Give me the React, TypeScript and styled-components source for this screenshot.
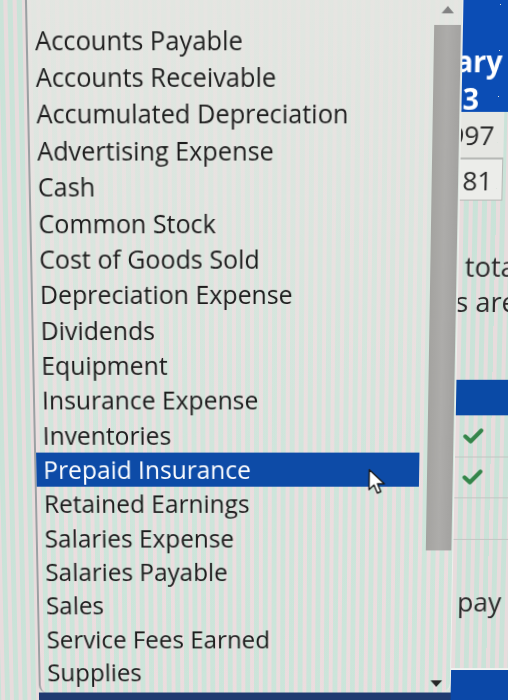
import React from "react";
import styled, { createGlobalStyle, css } from "styled-components";

const ACCOUNTS = [
  "Accounts Payable",
  "Accounts Receivable",
  "Accumulated Depreciation",
  "Advertising Expense",
  "Cash",
  "Common Stock",
  "Cost of Goods Sold",
  "Depreciation Expense",
  "Dividends",
  "Equipment",
  "Insurance Expense",
  "Inventories",
  "Prepaid Insurance",
  "Retained Earnings",
  "Salaries Expense",
  "Salaries Payable",
  "Sales",
  "Service Fees Earned",
  "Supplies",
];
const SELECTED = "Prepaid Insurance";

const GlobalStyle = createGlobalStyle`
  html, body { margin: 0; padding: 0; background: #dde4de; overflow: hidden; }
  #root { width: 508px; height: 700px; overflow: hidden; }
  *, *::before, *::after { box-sizing: border-box; }
`;

const moire = css`
  background-color: #dfe5e0;
  background-image: repeating-linear-gradient(
    90deg,
    rgba(238, 214, 219, 0.6) 0 4px,
    rgba(188, 225, 211, 0.6) 4px 9px
  );
`;

/* the whole screen, tilted a little like the photographed monitor */
const Scene = styled.div`
  display: flex;
  width: 540px;
  height: 740px;
  margin: -20px 0 0 -16px;
  transform-origin: 50% 50%;
  transform: perspective(1000px) rotateX(-5.2deg);
  font-family: "Open Sans", "Noto Sans", "DejaVu Sans", sans-serif;
  color: #1d1d1d;
`;

const Gutter = styled.div`
  flex: none;
  width: 48px;
  ${moire};
`;

const MenuColumn = styled.div`
  flex: none;
  width: 425px;
  display: flex;
  flex-direction: column;
`;

const Panel = styled.div`
  position: relative;
  flex: 1;
  display: flex;
  border-left: 2px solid #9aa1a3;
  border-right: 1px solid #eef0ed;
  border-radius: 0 0 10px 8px;
  overflow: hidden;
  background-color: #e1e6e1;
  background-image: linear-gradient(
      to bottom,
      rgba(229, 230, 226, 0.95) 0px,
      rgba(229, 230, 226, 0.6) 260px,
      rgba(229, 230, 226, 0.2) 520px,
      rgba(229, 230, 226, 0.1) 740px
    ),
    repeating-linear-gradient(
      90deg,
      rgba(240, 216, 221, 0.75) 0 4px,
      rgba(192, 228, 214, 0.75) 4px 9px
    );

  &::before {
    content: "";
    position: absolute;
    left: -2px;
    top: 0;
    width: 2px;
    height: 134px;
    background: #2b3d6e;
  }
`;

const BottomStrip = styled.div`
  flex: none;
  height: 15px;
  background: #1f3a70;
`;

const List = styled.ul`
  flex: 1;
  list-style: none;
  margin: 0;
  padding: 49.8px 7px 0 0;
`;

const Item = styled.li<{ $selected?: boolean }>`
  position: relative;
  height: 35.35px;
  line-height: 35.35px;
  padding-left: 7px;
  font-size: 24.8px;
  white-space: nowrap;
  color: ${(p) => (p.$selected ? "#ffffff" : "#1d1d1d")};
  background: ${(p) => (p.$selected ? "#0d4ba7" : "transparent")};
`;

const Cursor = styled.svg`
  position: absolute;
  left: 335px;
  top: 16px;
  width: 20px;
  height: 28px;
`;

const Scrollbar = styled.div`
  flex: none;
  width: 28px;
  display: flex;
  flex-direction: column;
  align-items: center;
  padding-top: 35px;
`;

const Arrow = styled.div<{ $dir: "up" | "down" }>`
  flex: none;
  width: 0;
  height: 0;
  border-left: 6px solid transparent;
  border-right: 6px solid transparent;
  ${(p) =>
    p.$dir === "up"
      ? css`
          border-bottom: 7px solid #828282;
          margin-bottom: 11px;
        `
      : css`
          border-top: 7px solid #262626;
          margin-top: auto;
          margin-bottom: 6px;
        `}
`;

const Thumb = styled.div`
  flex: none;
  width: 26px;
  height: 521.5px;
  background: linear-gradient(90deg, #a4a3a0 0%, #adacaa 50%, #a3a2a0 100%);
`;

const RightPane = styled.div`
  flex: 1;
  overflow: hidden;
  display: flex;
  ${moire};
`;

/* the page that the open menu covers; only its right edge shows */
const Sheet = styled.div`
  flex: none;
  width: 164px;
  margin-left: -97px;
  display: flex;
  flex-direction: column;
`;

const HeaderCell = styled.div`
  flex: none;
  height: 136px;
  padding-top: 69px;
  overflow: hidden;
  background: #0b4db5;
  color: #ffffff;
  font-weight: 700;
  font-size: 28px;
  line-height: 36px;
  text-align: center;
`;

const AmountRow = styled.div<{ $h: number; $boxed?: boolean }>`
  flex: none;
  height: ${(p) => p.$h}px;
  line-height: ${(p) => p.$h}px;
  margin-right: 25px;
  padding-right: 9px;
  text-align: right;
  font-size: 26px;
  color: #2a2a2a;
  background: ${(p) => (p.$boxed ? "#ecedea" : "#e6e7e3")};
  border: ${(p) => (p.$boxed ? "1px solid #b7b9b6" : "none")};
  border-bottom: 1px solid #b7b9b6;
`;

const Para = styled.div<{ $mt: number }>`
  flex: none;
  margin-top: ${(p) => p.$mt}px;
  font-size: 27px;
  line-height: 34.5px;
  color: #2a2a2a;
  white-space: nowrap;
`;

const TextLine = styled.div<{ $indent: number }>`
  padding-left: ${(p) => p.$indent}px;
`;

const BlueBar = styled.div`
  flex: none;
  height: 35.4px;
  margin-top: 61px;
  background: #0a4aa6;
`;

const CheckRow = styled.div<{ $h: number }>`
  flex: none;
  height: ${(p) => p.$h}px;
  display: flex;
  align-items: center;
  padding-left: 104px;
  border-bottom: 1px solid #c2c5c2;
`;

const PayBlock = styled.div`
  flex: 1;
  padding-top: 47px;
  font-size: 27px;
  line-height: 36px;
  color: #2a2a2a;
  white-space: nowrap;
`;

const BottomBlue = styled.div`
  flex: none;
  height: 41.2px;
  border-top: 2px solid #f2f4f2;
  background: #0b48a8;
`;

const Check = () => (
  <svg width="22" height="18" viewBox="0 0 22 18">
    <path
      d="M3 9.5 L8.5 14.5 L19 3.5"
      fill="none"
      stroke="#34854a"
      strokeWidth="4.2"
      strokeLinecap="round"
      strokeLinejoin="round"
    />
  </svg>
);

export default function App() {
  return (
    <>
      <GlobalStyle />
      <Scene>
        <Gutter />
        <MenuColumn>
          <Panel>
            <List>
              {ACCOUNTS.map((name) => (
                <Item key={name} $selected={name === SELECTED}>
                  {name}
                  {name === SELECTED && (
                    <Cursor viewBox="0 0 20 28">
                      <path
                        d="M1.5 1.5 L1.5 22 L6.5 17.3 L10 25.5 L13.5 24 L10 16 L17 16 Z"
                        fill="#ffffff"
                        stroke="#1a1a1a"
                        strokeWidth="1.4"
                        strokeLinejoin="round"
                      />
                    </Cursor>
                  )}
                </Item>
              ))}
            </List>
            <Scrollbar>
              <Arrow $dir="up" />
              <Thumb />
              <Arrow $dir="down" />
            </Scrollbar>
          </Panel>
          <BottomStrip />
        </MenuColumn>
        <RightPane>
          <Sheet>
            <HeaderCell>
              January
              <br />
              2023
            </HeaderCell>
            <AmountRow $h={44.5}>1,997</AmountRow>
            <AmountRow $h={41} $boxed>
              1,181
            </AmountRow>
            <Para $mt={48.8}>
              <TextLine $indent={55}>the total</TextLine>
              <TextLine $indent={29}>assets are</TextLine>
            </Para>
            <BlueBar />
            <CheckRow $h={43}>
              <Check />
            </CheckRow>
            <CheckRow $h={42}>
              <Check />
            </CheckRow>
            <CheckRow $h={43.5} />
            <PayBlock>
              <TextLine $indent={102}>pay</TextLine>
            </PayBlock>
            <BottomBlue />
          </Sheet>
        </RightPane>
      </Scene>
    </>
  );
}
